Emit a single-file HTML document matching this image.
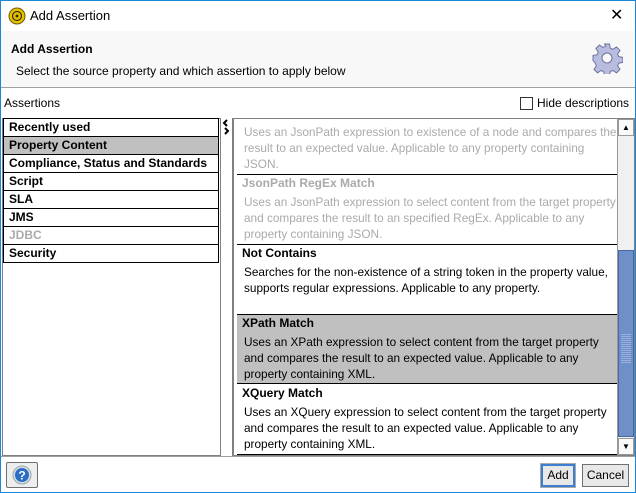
<!DOCTYPE html>
<html><head><style>
*{margin:0;padding:0;box-sizing:border-box}
body{width:636px;height:493px;overflow:hidden;background:#fff;font-family:"Liberation Sans",sans-serif;font-size:12px;color:#000;position:relative}
.a{position:absolute}
.win{position:absolute;left:0;top:0;width:636px;height:493px;border:1px solid #1c87d9}
.li{position:absolute;left:3px;width:216px;height:18px;border:1px solid #000;border-top:none;font-weight:bold;padding-left:5px;line-height:16px}
.t{position:absolute;left:242px;font-weight:bold;white-space:nowrap}
.d{position:absolute;left:244px;white-space:nowrap;line-height:16px;font-size:11.8px}
.g{color:#aaa}
.sep{position:absolute;left:237px;width:380px;height:1px;background:#000}
</style></head><body>
<div class="win"></div>
<svg class="a" style="left:8px;top:7px" width="18" height="18" viewBox="0 0 18 18"><circle cx="9" cy="9" r="8" fill="#e5c300" stroke="#6b5a00"/><circle cx="9" cy="9" r="4.5" fill="none" stroke="#3a3000" stroke-width="1.2"/><circle cx="9" cy="9" r="1.5" fill="#3a3000"/></svg>
<div class="a" style="left:30px;top:8px;font-size:13px">Add Assertion</div>
<div class="a" style="left:610px;top:5px;font-size:16px">✕</div>
<div class="a" style="left:1px;top:31px;width:634px;height:57px;background:#f8f8f8;border-bottom:1px solid #a0a0a0"></div>
<div class="a" style="left:11px;top:42px;font-weight:bold">Add Assertion</div>
<div class="a" style="left:16px;top:64px">Select the source property and which assertion to apply below</div>
<svg class="a" style="left:591px;top:42px" width="32" height="32" viewBox="0 0 32 32"><g fill="#b8bde0" stroke="#6c739c" stroke-width="1"><path d="M13.5 2h5l.8 4.2 2.6 1.1 3.6-2.4 3.5 3.5-2.4 3.6 1.1 2.6 4.2.8v5l-4.2.8-1.1 2.6 2.4 3.6-3.5 3.5-3.6-2.4-2.6 1.1-.8 4.2h-5l-.8-4.2-2.6-1.1-3.6 2.4-3.5-3.5 2.4-3.6-1.1-2.6L2 18.5v-5l4.2-.8 1.1-2.6-2.4-3.6 3.5-3.5 3.6 2.4 2.6-1.1z"/></g><circle cx="16" cy="16" r="5" fill="#f8f8f8" stroke="#6c739c"/></svg>
<div class="a" style="left:4px;top:96px">Assertions</div>
<div class="a" style="left:520px;top:97px;width:13px;height:13px;border:1px solid #333;background:#fff"></div>
<div class="a" style="left:537px;top:96px">Hide descriptions</div>
<div class="a" style="left:2px;top:118px;width:219px;height:338px;border:1px solid #808080"></div>
<div class="a" style="left:3px;top:118px;width:216px;height:1px;background:#000"></div>
<div class="li" style="top:119px">Recently used</div>
<div class="li" style="top:137px;background:#c0c0c0">Property Content</div>
<div class="li" style="top:155px">Compliance, Status and Standards</div>
<div class="li" style="top:173px">Script</div>
<div class="li" style="top:191px">SLA</div>
<div class="li" style="top:209px">JMS</div>
<div class="li g" style="top:227px">JDBC</div>
<div class="li" style="top:245px">Security</div>
<svg class="a" style="left:222px;top:119px" width="8" height="16" viewBox="0 0 8 16"><path d="M5 1L2 4l3 3M3 9l3 3-3 3" fill="none" stroke="#000" stroke-width="2"/></svg>
<div class="a" style="left:232px;top:118px;width:403px;height:338px;border:1px solid #808080;border-left:2px solid #808080"></div>
<div class="d g" style="top:124px">Uses an JsonPath expression to existence of a node and compares the<br>result to an expected value. Applicable to any property containing<br>JSON.</div>
<div class="sep" style="top:174px"></div>
<div class="t g" style="top:176px">JsonPath RegEx Match</div>
<div class="d g" style="top:194px">Uses an JsonPath expression to select content from the target property<br>and compares the result to an specified RegEx. Applicable to any<br>property containing JSON.</div>
<div class="sep" style="top:244px"></div>
<div class="t" style="top:246px">Not Contains</div>
<div class="d" style="top:264px">Searches for the non-existence of a string token in the property value,<br>supports regular expressions. Applicable to any property.</div>
<div class="sep" style="top:314px"></div>
<div class="a" style="left:237px;top:315px;width:380px;height:69px;background:#c0c0c0;border-bottom:1px solid #000"></div>
<div class="t" style="top:316px">XPath Match</div>
<div class="d" style="top:334px">Uses an XPath expression to select content from the target property<br>and compares the result to an expected value. Applicable to any<br>property containing XML.</div>
<div class="t" style="top:386px">XQuery Match</div>
<div class="d" style="top:404px">Uses an XQuery expression to select content from the target property<br>and compares the result to an expected value. Applicable to any<br>property containing XML.</div>
<div class="sep" style="top:454px"></div>
<div class="a" style="left:617px;top:119px;width:17px;height:336px;background:#f0f0f0;border-left:1px solid #999"></div>
<div class="a" style="left:618px;top:119px;width:16px;height:17px;border:1px solid #999;background:#fafafa;font-size:8px;text-align:center;line-height:15px">▲</div>
<div class="a" style="left:618px;top:250px;width:16px;height:187px;background:#6f8fc8;border:1px solid #4a67a0"></div>
<div class="a" style="left:621px;top:333px;width:10px;height:30px;background:repeating-linear-gradient(0deg,#9bb0dc 0 1px,#6f8fc8 1px 2px)"></div>
<div class="a" style="left:618px;top:438px;width:16px;height:17px;border:1px solid #999;background:#fafafa;font-size:8px;text-align:center;line-height:15px">▼</div>
<div class="a" style="left:1px;top:456px;width:634px;height:1px;background:#a0a0a0"></div>
<div class="a" style="left:6px;top:462px;width:32px;height:26px;border:1px solid #707070;border-radius:2px;background:#eee"></div>
<svg class="a" style="left:12px;top:465px" width="20" height="20" viewBox="0 0 20 20"><circle cx="10" cy="10" r="9" fill="#d8dce6" stroke="#9aa"/><circle cx="10" cy="10" r="7" fill="#2a6fc4"/><text x="10" y="14.5" font-size="12" font-weight="bold" fill="#fff" text-anchor="middle" font-family="Liberation Sans">?</text></svg>
<div class="a" style="left:541px;top:464px;width:34px;height:23px;border:2px solid #3c7fd0;outline:1px solid #aaa;background:#e8e8e8;text-align:center;line-height:19px">Add</div>
<div class="a" style="left:582px;top:464px;width:47px;height:23px;border:1px solid #707070;background:#e8e8e8;text-align:center;line-height:21px">Cancel</div>
</body></html>
